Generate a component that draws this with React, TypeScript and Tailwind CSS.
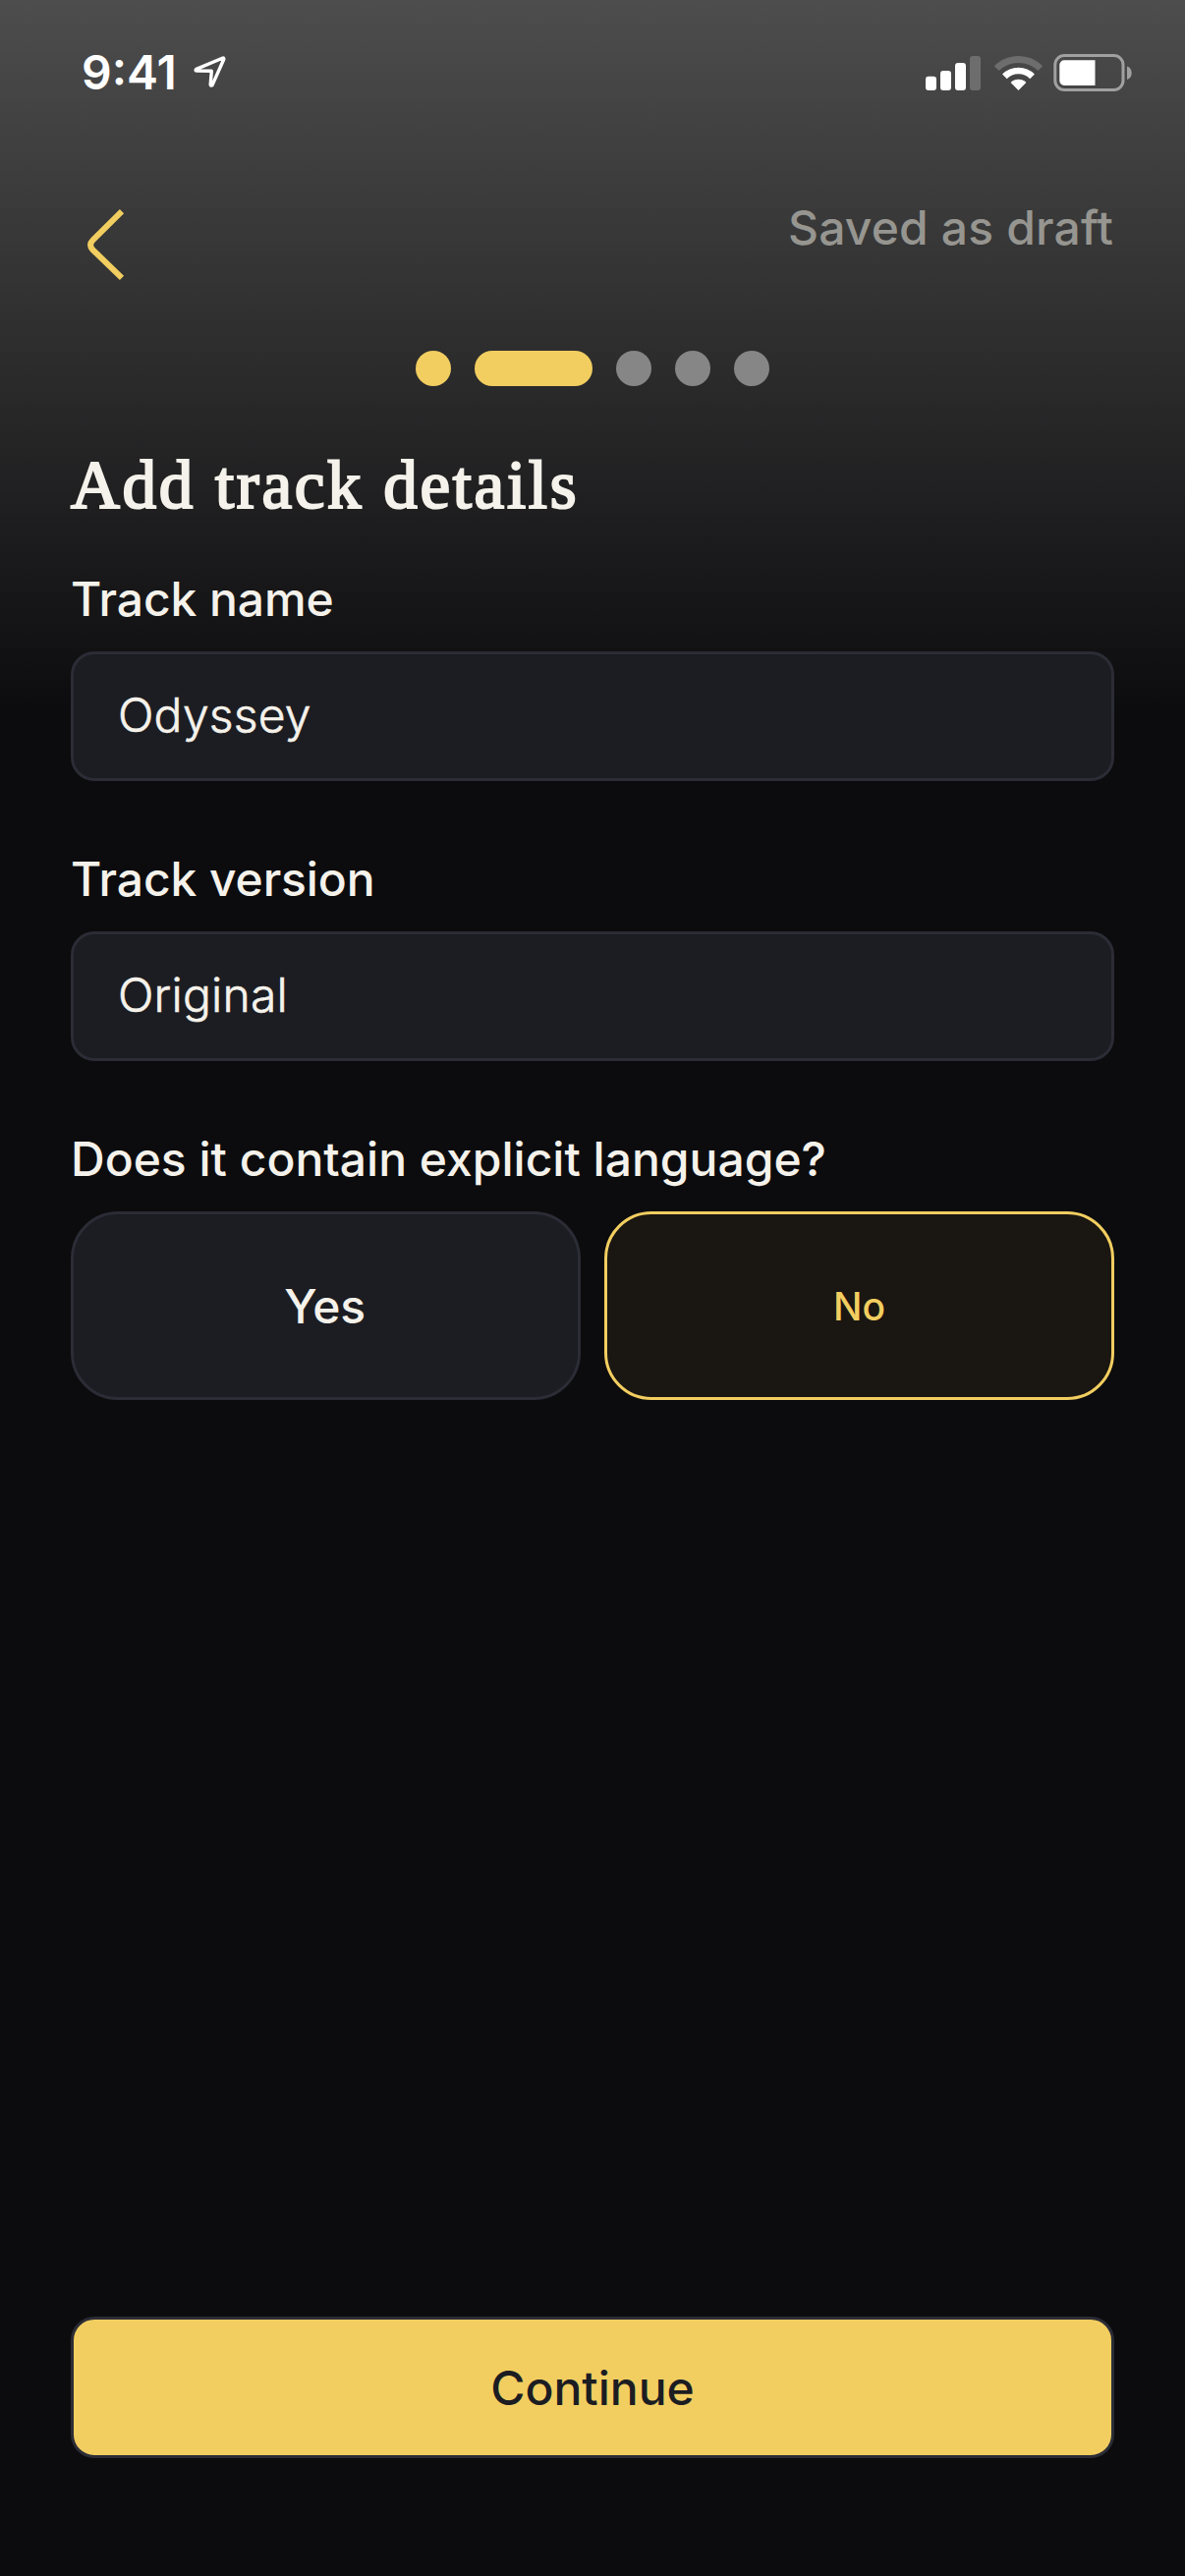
import { useState } from 'react'

interface FieldProps {
  label: string
  value: string
  onChange: (value: string) => void
}

function Field({ label, value, onChange }: FieldProps) {
  return (
    <label className="flex flex-col gap-[23px]">
      <span className="text-[48px] leading-[60px] font-medium tracking-[-0.1px]">{label}</span>
      <input
        type="text"
        value={value}
        onChange={(e) => onChange(e.target.value)}
        className="h-[132px] w-full rounded-3xl border-[3px] border-[#2b2c35] bg-[#1c1d22] px-[45px] pb-[3px] text-[48px] font-light tracking-[0.2px] outline-none [-webkit-text-stroke:0.6px_#f5f2eb]"
      />
    </label>
  )
}

function StatusBar() {
  return (
    <div className="flex h-[148px] items-center justify-between pl-[83px] pr-[53px]">
      <div className="flex items-center gap-[19px] text-white">
        <span className="w-[95px] whitespace-nowrap text-[48px] leading-[60px] font-semibold">9:41</span>
        <svg width="34" height="34" viewBox="0 0 34 34" fill="none">
          <path
            d="M29.8 2 L2.8 13.4 Q1.2 14.8 3.2 15.1 L18.3 15.3 L17.2 29.2 Q18 31 19.2 29.4 L30.8 3.2 Q30.8 1.6 29.8 2 Z"
            stroke="currentColor"
            strokeWidth="3.4"
            strokeLinejoin="round"
          />
        </svg>
      </div>
      <svg width="211" height="38" viewBox="0 0 211 38" fill="none">
        {/* Signal */}
        <rect x="0" y="22.7" width="11" height="14.3" rx="3" fill="#fff" />
        <rect x="15" y="17" width="11" height="20" rx="3" fill="#fff" />
        <rect x="30" y="9" width="11" height="28" rx="3" fill="#fff" />
        <rect x="45" y="2" width="11" height="35" rx="3" fill="#6d6d6d" />
        {/* Wifi */}
        <path d="M72.2 14.7 A31.6 31.6 0 0 1 116.8 14.7" stroke="#6d6d6d" strokeWidth="6.8" />
        <path d="M80.4 22.9 A19.9 19.9 0 0 1 108.6 22.9" stroke="#fff" strokeWidth="6.6" />
        <path d="M94.5 37 L86.6 29.1 A11.2 11.2 0 0 1 102.4 29.1 Z" fill="#fff" />
        {/* Battery */}
        <rect x="131.8" y="1.5" width="69.2" height="35" rx="9.5" stroke="#a0a0a0" strokeWidth="3" />
        <path d="M172.5 6.3 H141 A4.7 4.7 0 0 0 136.3 11 V27.3 A4.7 4.7 0 0 0 141 32 H172.5 Z" fill="#fff" />
        <path d="M205 12.5 A7.2 7.2 0 0 1 205 26 Z" fill="#a0a0a0" />
      </svg>
    </div>
  )
}

const steps = ['Upload', 'Details', 'Artwork', 'Credits', 'Review']
const currentStep = 1

export default function App() {
  const [name, setName] = useState('Odyssey')
  const [version, setVersion] = useState('Original')

  return (
    <div className="flex h-[2622px] w-[1206px] flex-col overflow-hidden bg-[#0c0c0e] bg-[linear-gradient(180deg,#4d4d4d_0px,#0c0c0e_726px)] font-['Inter',sans-serif] text-[#f5f2eb]">
      <StatusBar />

      <header className="flex h-[209px] items-start justify-between pl-[72px] pr-[73px] pt-[53px]">
        <button type="button" aria-label="Back" className="mt-3">
          <svg width="72" height="72" viewBox="0 0 72 72" fill="none">
            <path d="M52 2.2 L22.5 31.3 Q17.5 36.3 22.5 41.3 L52 69.8" stroke="#f2ce60" strokeWidth="6" />
          </svg>
        </button>
        <span className="mt-px text-[48px] leading-[60px] font-medium tracking-[0.15px] text-[#969590]">
          Saved as draft
        </span>
      </header>

      <div className="flex h-9 justify-center gap-6">
        {steps.map((step, i) => (
          <span
            key={step}
            className={`h-9 rounded-full ${i === currentStep ? 'w-[120px]' : 'w-9'} ${
              i <= currentStep ? 'bg-[#f2ce60]' : 'bg-[#868686]'
            }`}
          />
        ))}
      </div>

      <main className="flex flex-1 flex-col px-[72px] pt-[59px]">
        <h1 className="whitespace-nowrap font-['Liberation_Serif',serif] text-[69px] leading-[84px] font-normal tracking-[2.7px] [-webkit-text-stroke:2.2px_#f5f2eb]">
          Add track details
        </h1>

        <div className="mt-[44px] flex flex-col gap-[70px]">
          <Field label="Track name" value={name} onChange={setName} />
          <Field label="Track version" value={version} onChange={setVersion} />

          <div className="flex flex-col gap-[23px]">
            <span className="text-[48px] leading-[60px] font-medium">Does it contain explicit language?</span>
            <div className="grid grid-cols-2 gap-6">
              <button
                type="button"
                className="h-48 rounded-[48px] border-[3px] border-[#2b2c35] bg-[#1c1d22] pt-[2px] pr-[2px] text-[48px] font-medium tracking-[-0.3px]"
              >
                Yes
              </button>
              <button
                type="button"
                className="h-48 rounded-[48px] border-[3px] border-[#f2ce60] bg-[#1a1612] pt-[2px] text-[39px] font-medium text-[#f2ce60]"
              >
                No
              </button>
            </div>
          </div>
        </div>

        <button
          type="button"
          className="mt-auto mb-[120px] h-36 w-full rounded-3xl border-[3px] border-[#2b2c35] bg-[#f2ce60] pt-px text-[48px] font-medium text-[#1c1d22]"
        >
          Continue
        </button>
      </main>
    </div>
  )
}
